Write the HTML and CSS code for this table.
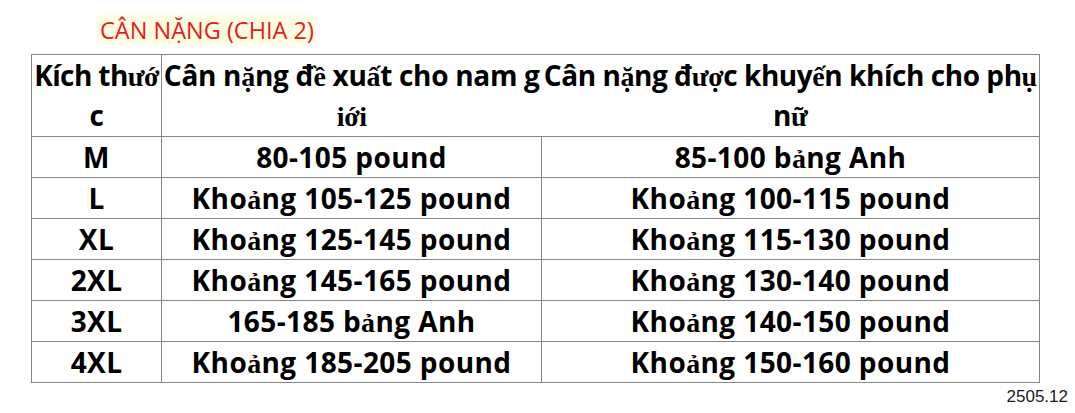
FILE: index.html
```html
<!DOCTYPE html>
<html lang="vi">
<head>
<meta charset="utf-8">
<title>Cân nặng</title>
<link rel="stylesheet" href="styles.css">
</head>
<body>
<div class="page">
  <div class="title">CÂN NẶNG (CHIA 2)</div>
  <table class="size-table">
    <colgroup>
      <col class="col-size">
      <col class="col-men">
      <col class="col-women">
    </colgroup>
    <thead>
      <tr>
        <th class="h1"><span class="line">Kích th<span class="vn">ướ</span></span><span class="line">c</span></th>
        <th class="h2"><span class="line">Cân n<span class="vn">ặ</span>ng đ<span class="vn">ề</span> xu<span class="vn">ấ</span>t cho nam g</span><span class="line"><span class="vn">iới</span></span></th>
        <th class="h3"><span class="line">Cân n<span class="vn">ặ</span>ng đ<span class="vn">ượ</span>c khuy<span class="vn">ế</span>n khích cho ph<span class="vn">ụ</span></span><span class="line">n<span class="vn">ữ</span></span></th>
      </tr>
    </thead>
    <tbody>
      <tr><td>M</td><td>80-105 pound</td><td>85-100 b<span class="vn">ả</span>ng Anh</td></tr>
      <tr><td>L</td><td>Kho<span class="vn">ả</span>ng 105-125 pound</td><td>Kho<span class="vn">ả</span>ng 100-115 pound</td></tr>
      <tr><td>XL</td><td>Kho<span class="vn">ả</span>ng 125-145 pound</td><td>Kho<span class="vn">ả</span>ng 115-130 pound</td></tr>
      <tr><td>2XL</td><td>Kho<span class="vn">ả</span>ng 145-165 pound</td><td>Kho<span class="vn">ả</span>ng 130-140 pound</td></tr>
      <tr><td>3XL</td><td>165-185 b<span class="vn">ả</span>ng Anh</td><td>Kho<span class="vn">ả</span>ng 140-150 pound</td></tr>
      <tr><td>4XL</td><td>Kho<span class="vn">ả</span>ng 185-205 pound</td><td>Kho<span class="vn">ả</span>ng 150-160 pound</td></tr>
    </tbody>
  </table>
  <div class="code">2505.12</div>
</div>
</body>
</html>
```

FILE: styles.css
```css
html, body {
  margin: 0;
  padding: 0;
  background: #ffffff;
}

.page {
  width: 1075px;
  height: 413px;
  padding: 15px 0 0 31px;
  box-sizing: border-box;
  position: relative;
  font-family: "Open Sans", "Noto Sans", sans-serif;
  color: #000;
}

.title {
  display: inline-block;
  margin-left: 66px;
  height: 30px;
  padding: 0 3px;
  line-height: 30px;
  font-size: 23.5px;
  color: #e3201b;
  background: #fffde2;
}

.size-table {
  display: table;
  margin-top: 9px;
  border-collapse: collapse;
  table-layout: fixed;
  width: 1008px;
}

.col-size { width: 130px; }
.col-men { width: 380px; }
.col-women { width: 498px; }

.size-table th,
.size-table td {
  border: 1px solid #858585;
  padding: 0;
  text-align: center;
  font-weight: 700;
  font-size: 28px;
  white-space: nowrap;
  overflow: visible;
}

.size-table td {
  height: 40px;
  line-height: 40px;
  letter-spacing: 0.4px;
}

.size-table th {
  height: 81px;
  vertical-align: top;
  line-height: 40px;
}

.size-table th.h3 {
  border-left: hidden;
}

.line {
  display: block;
  height: 40px;
  line-height: 40px;
  letter-spacing: -0.3px;
}

.h1 .line { letter-spacing: -0.6px; }
.h3 .line { letter-spacing: -0.45px; }

.vn {
  font-family: "Liberation Serif", "Times New Roman", serif;
  font-weight: 700;
  line-height: 0;
}

.code {
  position: absolute;
  right: 7px;
  top: 387px;
  font-family: "Liberation Sans", Arial, sans-serif;
  font-size: 17px;
  color: #1a1a1a;
}
```
